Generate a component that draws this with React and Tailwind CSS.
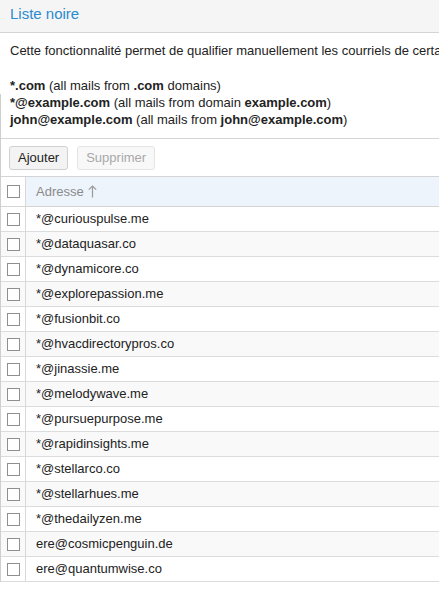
import React from 'react';

const addresses = [
  '*@curiouspulse.me',
  '*@dataquasar.co',
  '*@dynamicore.co',
  '*@explorepassion.me',
  '*@fusionbit.co',
  '*@hvacdirectorypros.co',
  '*@jinassie.me',
  '*@melodywave.me',
  '*@pursuepurpose.me',
  '*@rapidinsights.me',
  '*@stellarco.co',
  '*@stellarhues.me',
  '*@thedailyzen.me',
  'ere@cosmicpenguin.de',
  'ere@quantumwise.co',
];

function Box() {
  return <span className="block w-[13px] h-[13px] border border-[#8f8f8f] bg-white" />;
}

export default function App() {
  return <div className="w-[439px] h-[606px] overflow-hidden bg-white text-[13px] text-[#222] font-['Liberation_Sans',Arial,sans-serif]">
      <div className="h-[33px] bg-[#f5f5f5] border-b border-[#d4d4d4] pl-[10px] pb-[4px] flex items-center">
        <h1 className="text-[15px] text-[#2a8bd1] font-normal whitespace-nowrap">Liste noire</h1>
      </div>
      <p className="pl-[10px] pt-[9px] h-[44px] whitespace-nowrap leading-[17px]">
        Cette fonctionnalité permet de qualifier manuellement les courriels de certains expéditeurs.
      </p>
      <div className="pl-[10px] leading-[17px] whitespace-nowrap h-[61px]">
        <div><b>*.com</b> (all mails from <b>.com</b> domains)</div>
        <div className="border-l border-[#cfcfcf] -ml-[10px] pl-[9px]"><b>*@example.com</b> (all mails from domain <b>example.com</b>)</div>
        <div className="border-l border-[#cfcfcf] -ml-[10px] pl-[9px] h-[27px]"><b>john@example.com</b> (all mails from <b>john@example.com</b>)</div>
      </div>
      <div className="border-l border-[#cfcfcf]">
        <div className="border-t border-[#d4d4d4] h-[38px] flex items-center gap-[9px] pl-[8px]">
          <button className="h-[24px] px-[8px] bg-[#f3f3f3] border border-[#d0d0d0] rounded-[3px] text-[#222]">Ajouter</button>
          <button className="h-[24px] px-[8px] bg-[#f8f8f8] border border-[#e4e4e4] rounded-[3px] text-[#a8a8a8]">Supprimer</button>
        </div>
        <div className="border-t border-[#d4d4d4]">
          <div className="flex h-[30px] border-b border-[#d4d4d4]">
            <div className="w-[25px] border-r border-[#d8d8d8] flex items-center justify-center pl-[1px]"><Box /></div>
            <div className="flex-1 bg-[#edf4fc] flex items-center pl-[10px] text-[#8a8a8a]">
              Adresse
              <svg className="ml-[4px]" width="9" height="13" viewBox="0 0 9 13" fill="none" stroke="#9a9a9a" strokeWidth="1.2">
                <path d="M4.5 12.5V1M0.8 4.7L4.5 1l3.7 3.7" />
              </svg>
            </div>
          </div>
          {addresses.map((a, i) => <div key={a} className={`flex h-[25px] border-b border-[#dcdcdc] ${i % 2 ? 'bg-[#f9f9f9]' : 'bg-white'}`}>
              <div className="w-[25px] border-r border-[#d8d8d8] flex items-center justify-center pl-[1px]"><Box /></div>
              <div className="flex-1 flex items-center pl-[10px] whitespace-nowrap">{a}</div>
            </div>)}
        </div>
      </div>
    </div>;
}
